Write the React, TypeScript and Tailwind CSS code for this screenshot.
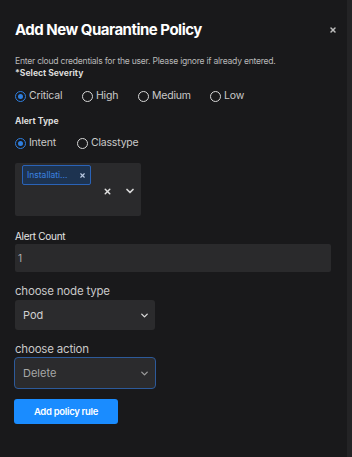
import { ChevronDown, X } from 'lucide-react';

function Radio({ label, checked = false }: { label: string; checked?: boolean }) {
  return (
    <label className="flex items-center gap-[3px]">
      <span
        className={
          checked
            ? 'w-[11px] h-[11px] rounded-full border-[1.5px] border-[#2f7fe0] flex items-center justify-center'
            : 'w-[11px] h-[11px] rounded-full border-[1.5px] border-[#d8d8d8]'
        }
      >
        {checked && <span className="w-[5px] h-[5px] rounded-full bg-[#2f7fe0]" />}
      </span>
      <span className="text-[10.5px] leading-[14px] text-[#c9c9c9] tracking-[-0.2px]">{label}</span>
    </label>
  );
}

export default function App() {
  return (
    <div className="w-[352px] h-[457px] bg-[#19191b] flex font-['Inter',sans-serif] overflow-hidden">
      <div className="flex-1 px-[15px] pt-[19px]">
        <div className="flex items-center justify-between">
          <h1 className="text-[15px] leading-[22px] font-bold text-white tracking-[-0.5px]">Add New Quarantine Policy</h1>
          <X size={8} strokeWidth={4.5} className="text-[#bdbdbd] -mr-[5px]" />
        </div>

        <p className="mt-[14px] text-[8.6px] text-[#b8b8b8] tracking-[-0.25px] leading-[12px]">
          Enter cloud credentials for the user. Please ignore if already entered.
        </p>
        <p className="text-[8.6px] font-bold text-[#dcdcdc] leading-[12px]">*Select Severity</p>

        <div className="mt-[10px] flex items-center">
          <div className="w-[67px]"><Radio label="Critical" checked /></div>
          <div className="w-[56px]"><Radio label="High" /></div>
          <div className="w-[72px]"><Radio label="Medium" /></div>
          <Radio label="Low" />
        </div>

        <p className="mt-[12px] text-[8.6px] font-bold text-[#dcdcdc] leading-[12px]">Alert Type</p>
        <div className="mt-[9px] flex items-center">
          <div className="w-[62px]"><Radio label="Intent" checked /></div>
          <Radio label="Classtype" />
        </div>

        <div className="mt-[13px] w-[126px] h-[53px] bg-[#2a2a2c] rounded-[2px] flex items-start pl-[7px] pt-[2px]">
          <div className="w-[69px] h-[20px] border border-[#2a63b8] bg-[#1d3350] rounded-[2px] flex items-center justify-between px-[4px]">
            <span className="text-[8.5px] leading-[10px] text-[#3b82e0]">Installati...</span>
            <X size={7} strokeWidth={4} className="text-[#b8c8e0]" />
          </div>
          <div className="ml-auto mt-[20px] mr-[5px] flex items-center gap-[12px]">
            <X size={9} strokeWidth={4} className="text-[#e0e0e0]" />
            <ChevronDown size={12} strokeWidth={3.5} className="text-[#d8d8d8]" />
          </div>
        </div>

        <p className="mt-[14px] text-[10px] leading-[12px] text-[#e6e6e6] tracking-[-0.3px]">Alert Count</p>
        <div className="mt-[2px] w-[316px] h-[28px] bg-[#2a2a2c] rounded-[2px] flex items-center pl-[3px]">
          <span className="text-[10px] leading-[12px] text-[#b0b0b0]">1</span>
        </div>

        <p className="mt-[12px] text-[11.5px] leading-[14px] text-[#c8c8c8] tracking-[-0.2px]">choose node type</p>
        <div className="mt-[2px] w-[140px] h-[30px] bg-[#2b2b2d] rounded-[3px] flex items-center justify-between pl-[8px] pr-[5px]">
          <span className="text-[11px] leading-[14px] text-[#d0d0d0]">Pod</span>
          <ChevronDown size={11} strokeWidth={3} className="text-[#d8d8d8]" />
        </div>

        <p className="mt-[12px] text-[11.5px] leading-[14px] text-[#c8c8c8] tracking-[-0.2px]">choose action</p>
        <div className="mt-[1px] -ml-[1px] w-[142px] h-[32px] bg-[#2b2b2d] border border-[#2d5a9a] rounded-[4px] flex items-center justify-between pl-[8px] pr-[5px]">
          <span className="text-[11px] leading-[14px] text-[#a8a8a8]">Delete</span>
          <ChevronDown size={11} strokeWidth={3} className="text-[#9a9a9a]" />
        </div>

        <button className="mt-[10px] -ml-[1px] w-[104px] h-[25px] bg-[#1a8cff] rounded-[3px] text-[9.5px] leading-[12px] font-semibold text-white tracking-[-0.3px]">
          Add policy rule
        </button>
      </div>
      <div className="w-[5px] bg-[#232325]" />
    </div>
  );
}
